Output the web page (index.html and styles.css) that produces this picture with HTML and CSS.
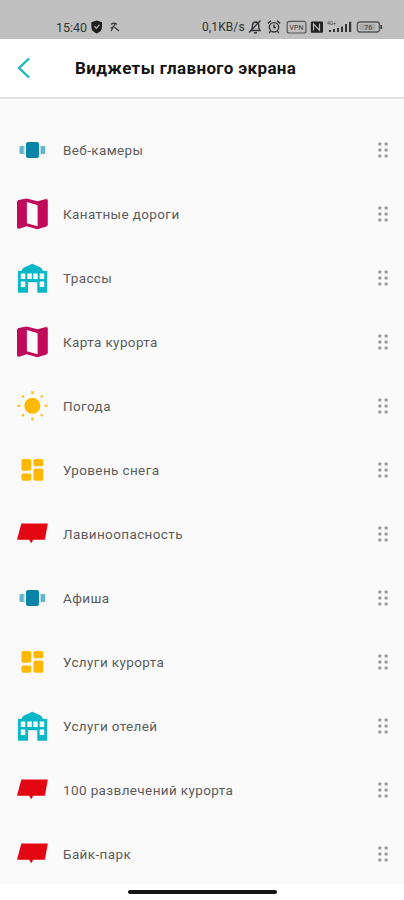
FILE: index.html
```
<!DOCTYPE html>
<html lang="ru">
<head>
<meta charset="utf-8">
<title>Виджеты главного экрана</title>
<link rel="stylesheet" href="styles.css">
</head>
<body>
<svg class="defs" width="0" height="0">
  <symbol id="cam" viewBox="0 0 32 32">
    <rect x="3.5" y="12" width="5" height="8" rx="1" fill="#62b5cb"/><rect x="24.2" y="12" width="5" height="8" rx="1" fill="#62b5cb"/>
    <rect x="7.6" y="11" width="1.6" height="10" fill="#c5e3eb"/><rect x="23.4" y="11" width="1.4" height="10" fill="#c5e3eb"/>
    <rect x="10" y="8" width="13" height="16" rx="2" fill="#0884a8"/>
  </symbol>
  <symbol id="map" viewBox="0 0 32 32">
    <path fill="#c00a5b" fill-rule="evenodd" d="M1 4.2Q1 2.4 2.6 1.9L10.5.6 21.5 3.2 30 1Q31.8.8 31.8 2.6V26.4Q31.8 28 30.4 28.6L21.4 31.2 10.8 28.2 3 30.7Q1 31 1 29ZM10.9 4.1V25.2L21.6 28.2V7.2Z"/>
  </symbol>
  <symbol id="hotel" viewBox="0 0 32 32">
    <path fill="#08b8c8" fill-rule="evenodd" d="M2 9H5.5L7 6 16.3 1.8 25.5 6 27 9H31V30.8H21.3V20.2H12V30.8H2ZM4.8 11.6V17H9.3V11.6ZM11.3 11.6V17H15.8V11.6ZM17.2 11.6V17H21.7V11.6ZM23.7 11.6V17H28.2V11.6ZM4.8 19.6V25H9.3V19.6ZM23.7 19.6V25H28.2V19.6Z"/>
  </symbol>
  <symbol id="sun" viewBox="0 0 32 32">
    <circle cx="16.4" cy="15.8" r="8" fill="#ffb904"/>
    <path stroke="#ffbd1c" stroke-width="2.2" stroke-linecap="round" d="M16.4 2.2v1M16.4 28.6v1M2.4 15.8h1M29.6 15.8h1M6.8 6.2l.5.5M25.5 25l.5.5M6.8 25.5l.5-.5M25.5 6.7l.5-.5"/>
  </symbol>
  <symbol id="dash" viewBox="0 0 32 32">
    <g fill="#ffb904"><rect x="5.4" y="5" width="9.8" height="11.8" rx="1.7"/><rect x="17.4" y="5" width="10" height="7.2" rx="1.7"/><rect x="5.4" y="19.4" width="9.8" height="7.4" rx="1.7"/><rect x="17.4" y="14.6" width="10" height="12.2" rx="1.7"/></g>
  </symbol>
  <symbol id="flag" viewBox="0 0 32 32">
    <path fill="#e30613" d="M5.3 5.4H31.8L29 21.8H17.2L15.2 25.2 13.2 21.8H1Z"/>
  </symbol>
  <symbol id="grip" viewBox="0 0 12 18">
    <g fill="#9a9a9a"><rect x="1.4" y="1.6" width="3" height="3" rx=".6"/><rect x="7.6" y="1.6" width="3" height="3" rx=".6"/><rect x="1.4" y="7.6" width="3" height="3" rx=".6"/><rect x="7.6" y="7.6" width="3" height="3" rx=".6"/><rect x="1.4" y="13.6" width="3" height="3" rx=".6"/><rect x="7.6" y="13.6" width="3" height="3" rx=".6"/></g>
  </symbol>
</svg>
<div class="status">
  <span class="clock">15:40</span>
  <svg class="left-icons" width="34" height="16" viewBox="0 0 34 16">
    <path fill="#1d1d1d" d="M6.7 1.5 12 3.3V8Q12 12.5 6.7 14.5 1.4 12.5 1.4 8V3.3Z"/><path d="M4.4 7.3 6.3 9.2 9.5 5.8" fill="none" stroke="#aaa" stroke-width="1.3"/>
    <path d="M21 5.5Q24 3 27 5.5M25 5 21 12M24.5 8 29 12M20.5 9 23 8" fill="none" stroke="#3d3d3d" stroke-width="1.3"/>
  </svg>
  <span class="speed">0,1KB/s</span>
  <svg class="right-icons" width="138" height="16" viewBox="0 0 138 16">
    <g fill="none" stroke="#333" stroke-width="1.4">
      <path d="M3 11.5H12L10.8 9V6.5Q10.6 3 7.5 3 4.4 3.3 4.4 6.5V9ZM1 13.5 12.5 1.5M6 13.8H9"/>
      <circle cx="26" cy="8.3" r="4.7"/><path d="M19.8 4.4 23 1.8M32.2 4.4 29 1.8M26 5.5V8.5H28M22.5 12.2 21.3 14M29.5 12.2 30.7 14"/>
      <rect x="39.2" y="2.4" width="18.7" height="11.6" rx="2" stroke="#555" stroke-width="1.2"/>
      <rect x="109.4" y="3" width="22" height="10" rx="2.5" stroke="#555" stroke-width="1.3"/>
    </g>
    <text x="48.5" y="10.6" class="tiny" text-anchor="middle">VPN</text>
    <rect x="62.8" y="2.4" width="12.2" height="11.4" rx="1" fill="#222"/><path d="M65.5 11.5V5L71.5 11.2V4.5" fill="none" stroke="#bbb" stroke-width="1.2"/>
    <text x="79" y="6" class="micro">4G+</text>
    <path fill="#333" d="M81 11h2v2h-2zM85 10h2v3h-2zM89 9h2v4h-2zM93 7.5h2V13h-2zM97 5h2v8h-2zM101 2.8h2.2V13H101zM132.5 6h1.6v4h-1.6z"/>
    <rect x="111.5" y="5" width="16" height="6" rx="1" fill="#aaa"/><text x="120.3" y="10.5" class="tiny" text-anchor="middle">76</text>
  </svg>
</div>
<header class="header">
  <svg class="back" width="14" height="22" viewBox="0 0 14 22"><path d="M12 1.5 2.2 11 12 20.5" fill="none" stroke="#20b4c1" stroke-width="2.4"/></svg>
  <h1>Виджеты главного экрана</h1>
</header>
<main class="list">
  <div class="row"><svg class="icon"><use href="#cam"/></svg><span>Веб-камеры</span><svg class="grip"><use href="#grip"/></svg></div>
  <div class="row"><svg class="icon"><use href="#map"/></svg><span>Канатные дороги</span><svg class="grip"><use href="#grip"/></svg></div>
  <div class="row"><svg class="icon"><use href="#hotel"/></svg><span>Трассы</span><svg class="grip"><use href="#grip"/></svg></div>
  <div class="row"><svg class="icon"><use href="#map"/></svg><span>Карта курорта</span><svg class="grip"><use href="#grip"/></svg></div>
  <div class="row"><svg class="icon"><use href="#sun"/></svg><span>Погода</span><svg class="grip"><use href="#grip"/></svg></div>
  <div class="row"><svg class="icon"><use href="#dash"/></svg><span>Уровень снега</span><svg class="grip"><use href="#grip"/></svg></div>
  <div class="row"><svg class="icon"><use href="#flag"/></svg><span>Лавиноопасность</span><svg class="grip"><use href="#grip"/></svg></div>
  <div class="row"><svg class="icon"><use href="#cam"/></svg><span>Афиша</span><svg class="grip"><use href="#grip"/></svg></div>
  <div class="row"><svg class="icon"><use href="#dash"/></svg><span>Услуги курорта</span><svg class="grip"><use href="#grip"/></svg></div>
  <div class="row"><svg class="icon"><use href="#hotel"/></svg><span>Услуги отелей</span><svg class="grip"><use href="#grip"/></svg></div>
  <div class="row"><svg class="icon"><use href="#flag"/></svg><span>100 развлечений курорта</span><svg class="grip"><use href="#grip"/></svg></div>
  <div class="row"><svg class="icon"><use href="#flag"/></svg><span>Байк-парк</span><svg class="grip"><use href="#grip"/></svg></div>
</main>
<footer class="nav"><div class="home"></div></footer>
</body>
</html>
```
FILE: styles.css
```
* { box-sizing: border-box; }
body { margin: 0; width: 404px; height: 900px; overflow: hidden; display: flex; flex-direction: column; background: #fff; font-family: Roboto, sans-serif; }
.defs { position: absolute; }
svg { display: block; flex: none; }
.status { height: 39px; flex: none; background: #c0c0c0; display: flex; align-items: center; padding: 15px 0 0 56px; color: #333; font-size: 12px; }
.clock { width: 34px; font-size: 12.5px; }
.speed { margin-left: 78px; width: 46px; letter-spacing: .1px; white-space: nowrap; }
.tiny { font: 500 7px Roboto, sans-serif; fill: #555; }
.micro { font: 5px Roboto, sans-serif; fill: #444; }
.header { height: 60px; flex: none; display: flex; align-items: center; padding: 0 17px; border-bottom: 2px solid #e0e0e0; }
.header h1 { margin: 0 0 0 44px; font-size: 17px; font-weight: 700; line-height: 24px; letter-spacing: .38px; color: #141414; white-space: nowrap; }
.list { height: 785px; flex: none; background: #fafafa; padding-top: 19px; overflow: hidden; }
.row { height: 64px; display: flex; align-items: center; padding: 0 15px 0 16px; }
.icon { width: 32px; height: 32px; margin-right: 15px; }
.row span { flex: 1; font-size: 13.5px; line-height: 20px; letter-spacing: .38px; color: #5c5c5c; white-space: nowrap; }
.grip { width: 12px; height: 18px; }
.nav { flex: 1; display: flex; justify-content: center; padding-top: 6px; }
.home { width: 149px; height: 4px; border-radius: 2px; background: #151515; }
```
